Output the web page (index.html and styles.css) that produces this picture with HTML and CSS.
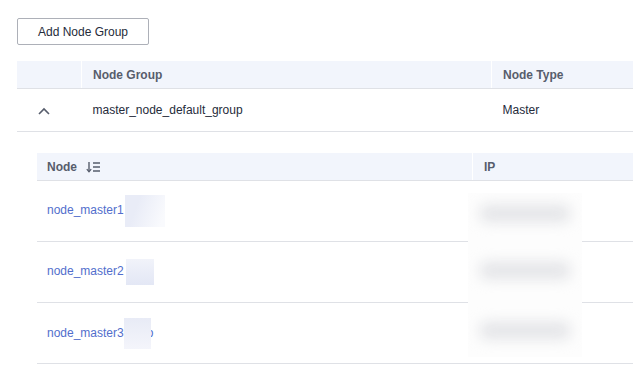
FILE: index.html
```html
<!DOCTYPE html>
<html lang="en">
<head>
    <meta charset="UTF-8">
    <meta name="viewport" content="width=device-width, initial-scale=1.0">
    <title>Node Groups</title>
    <link rel="stylesheet" href="styles.css">
</head>
<body>
    <div class="page">
        <button class="btn">Add Node Group</button>

        <table class="group-table">
            <thead>
                <tr>
                    <th class="col-toggle"></th>
                    <th class="col-group">Node Group</th>
                    <th>Node Type</th>
                </tr>
            </thead>
            <tbody>
                <tr class="group-row">
                    <td class="col-toggle">
                        <svg class="chevron" width="12" height="8" viewBox="0 0 12 8">
                            <path d="M1 7 L6 2 L11 7" fill="none" stroke="#575d6c" stroke-width="1.6"/>
                        </svg>
                    </td>
                    <td>master_node_default_group</td>
                    <td>Master</td>
                </tr>
                <tr class="detail-row">
                    <td colspan="3">
                        <div class="detail">
                            <table class="node-table">
                                <thead>
                                    <tr>
                                        <th class="col-node">
                                            Node
                                            <svg class="sort" width="15" height="12" viewBox="0 0 15 12">
                                                <path d="M3 1 V10.5" stroke="#575d6c" stroke-width="1.4"/>
                                                <path d="M0.8 8.2 L3 10.8 L5.2 8.2" fill="none" stroke="#575d6c" stroke-width="1.3"/>
                                                <path d="M7 2 H14 M7 6 H14 M7 10 H14" stroke="#575d6c" stroke-width="1.5"/>
                                            </svg>
                                        </th>
                                        <th>IP</th>
                                    </tr>
                                </thead>
                                <tbody>
                                    <tr>
                                        <td><a href="#">node_master1</a><span class="mask mask-1"></span></td>
                                        <td></td>
                                    </tr>
                                    <tr>
                                        <td><a href="#">node_master2</a><span class="mask mask-2"></span></td>
                                        <td></td>
                                    </tr>
                                    <tr>
                                        <td><a href="#">node_master3</a><span class="mask mask-3"></span><a href="#" class="tail">o</a></td>
                                        <td></td>
                                    </tr>
                                </tbody>
                            </table>

                            <!-- blurred ip addresses -->
                            <div class="ip-mask">
                                <div class="blob"></div>
                                <div class="blob"></div>
                                <div class="blob"></div>
                            </div>
                        </div>
                    </td>
                </tr>
            </tbody>
        </table>
    </div>
</body>
</html>
```

FILE: styles.css
```css
/* Global Styles */
body {
    margin: 0;
    padding: 0;
    background: #ffffff;
    font-family: 'Liberation Sans', Arial, sans-serif;
    font-size: 12px;
    color: #252b3a;
    overflow: hidden;
}

.page {
    padding: 18px 0 0 17px;
    width: 720px;
}

.btn {
    display: block;
    width: 132px;
    height: 27px;
    padding: 0;
    border: 1px solid #adb0b8;
    border-radius: 2px;
    background: #ffffff;
    font-family: inherit;
    font-size: 12px;
    color: #252b3a;
}

table {
    border-collapse: collapse;
    width: 100%;
}

th, td {
    text-align: left;
    padding: 0 0 0 11px;
    border-bottom: 1px solid #dfe1e6;
}

th {
    height: 27px;
    background-color: #f2f5fc;
    color: #575d6c;
    font-weight: bold;
    border-left: 1px solid #ffffff;
}

th:first-child {
    border-left: none;
}

/* Outer group table */
.group-table {
    margin-top: 16px;
}

.group-table .col-toggle {
    width: 64px;
    padding: 0;
}

.group-table .col-group {
    width: 398px;
}

.group-row td {
    height: 42px;
}

.chevron {
    display: block;
    margin: 2px 0 0 21px;
}

.detail-row > td {
    padding: 0;
    border-bottom: none;
}

.detail {
    position: relative;
    padding: 21px 0 0 20px;
}

/* Inner node table */
.node-table th:first-child,
.node-table td:first-child {
    padding-left: 10px;
}

.node-table .col-node {
    width: 425px;
}

.node-table td {
    height: 60px;
}

.sort {
    vertical-align: -2px;
    margin-left: 6px;
}

a {
    color: #526ecc;
    text-decoration: none;
}

.tail {
    display: inline-block;
    width: 3px;
    overflow: hidden;
    text-indent: -4px;
    vertical-align: middle;
}

.mask {
    display: inline-block;
    vertical-align: middle;
}

.mask-1 {
    width: 40px;
    height: 32px;
    margin-left: 1px;
    background: linear-gradient(110deg, #e9ecf7 30%, #f9fafd 90%);
}

.mask-2 {
    width: 28px;
    height: 26px;
    margin-left: 2px;
    background: linear-gradient(180deg, #f1f3fa, #e3e7f5);
}

.mask-3 {
    width: 27px;
    height: 31px;
    background: linear-gradient(180deg, #e8ebf6, #f4f5fb);
}

.ip-mask {
    position: absolute;
    left: 451px;
    top: 61px;
    width: 114px;
    height: 164px;
    background: #fdfdfd;
    overflow: hidden;
}

.blob {
    height: 17px;
    margin: 12px 12px 0 12px;
    background: #e3e4e7;
    border-radius: 6px;
    filter: blur(7px);
}

.blob + .blob {
    margin-top: 40px;
}

.blob:last-child {
    margin-top: 43px;
}
```
